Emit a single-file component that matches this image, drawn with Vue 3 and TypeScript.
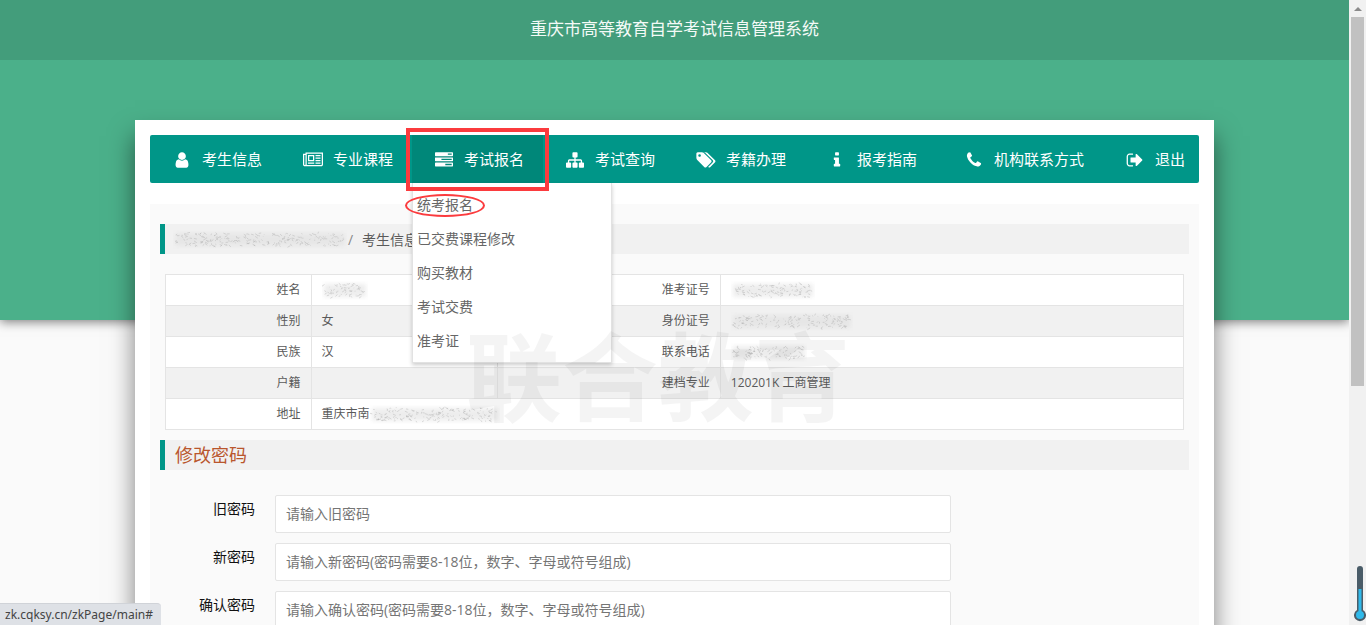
<script setup lang="ts">
interface NavItem {
  label: string
  box: string
  path: string
  active?: boolean
  spaced?: boolean
}

const bar = 'v256q0 26-19 45t-45 19h-1664q-26 0-45-19t-19-45v-256q0-26 19-45t45-19h1664q26 0 45 19t19 45z'

const navItems: NavItem[] = [
  {
    label: '考生信息',
    box: '0 0 1792 1792',
    path: 'M1536 1399q0 109-62.5 187t-150.5 78h-854q-88 0-150.5-78t-62.5-187q0-85 8.5-160.5t31.5-152 58.5-131 94-89 134.5-34.5q131 128 313 128t313-128q76 0 134.5 34.5t94 89 58.5 131 31.5 152 8.5 160.5zm-256-887q0 159-112.5 271.5t-271.5 112.5-271.5-112.5-112.5-271.5 112.5-271.5 271.5-112.5 271.5 112.5 112.5 271.5z',
  },
  {
    label: '专业课程',
    box: '0 0 2048 1792',
    path: 'M1024 512h-384v384h384v-384zm128 640v128h-640v-128h640zm0-768v640h-640v-640h640zm640 768v128h-512v-128h512zm0-256v128h-512v-128h512zm0-256v128h-512v-128h512zm0-256v128h-512v-128h512zm-1536 960v-960h-128v960q0 26 19 45t45 19 45-19 19-45zm1664 0v-1088h-1536v1088q0 33-11 64h1483q26 0 45-19t19-45zm128-1216v1216q0 80-56 136t-136 56h-1664q-80 0-136-56t-56-136v-1088h256v-128h1792z',
  },
  {
    label: '考试报名',
    box: '0 0 1792 1792',
    active: true,
    path: `M1024 1408h640v-128h-640v128zM640 896h1024v-128h-1024v128zM1280 384h384v-128h-384v128zM1792 1216${bar}M1792 704${bar}M1792 192${bar}`,
  },
  {
    label: '考试查询',
    box: '0 0 1792 1792',
    path: 'M1792 1248v320q0 40-28 68t-68 28h-320q-40 0-68-28t-28-68v-320q0-40 28-68t68-28h96v-192h-512v192h96q40 0 68 28t28 68v320q0 40-28 68t-68 28h-320q-40 0-68-28t-28-68v-320q0-40 28-68t68-28h96v-192h-512v192h96q40 0 68 28t28 68v320q0 40-28 68t-68 28h-320q-40 0-68-28t-28-68v-320q0-40 28-68t68-28h96v-192q0-52 38-90t90-38h512v-192h-96q-40 0-68-28t-28-68v-320q0-40 28-68t68-28h320q40 0 68 28t28 68v320q0 40-28 68t-68 28h-96v192h512q52 0 90 38t38 90v192h96q40 0 68 28t28 68z',
  },
  {
    label: '考籍办理',
    box: '128 0 1920 1792',
    path: 'M576 448q0-53-37.5-90.5t-90.5-37.5-90.5 37.5-37.5 90.5 37.5 90.5 90.5 37.5 90.5-37.5 37.5-90.5zm1067 576q0 53-37 90l-491 492q-39 37-91 37-53 0-90-37l-715-716q-38-37-64.5-101t-26.5-117v-416q0-52 38-90t90-38h416q53 0 117 26.5t102 64.5l715 714q37 39 37 91zm384 0q0 53-37 90l-491 492q-39 37-91 37-36 0-59-14t-53-45l470-470q37-37 37-90 0-52-37-91l-715-714q-38-38-102-64.5t-117-26.5h224q53 0 117 26.5t102 64.5l715 714q37 39 37 91z',
  },
  {
    label: '报考指南',
    box: '0 0 1792 1792',
    path: 'M1216 1344v128q0 26-19 45t-45 19h-512q-26 0-45-19t-19-45v-128q0-26 19-45t45-19h64v-384h-64q-26 0-45-19t-19-45v-128q0-26 19-45t45-19h384q26 0 45 19t19 45v576h64q26 0 45 19t19 45zm-128-1152v192q0 26-19 45t-45 19h-256q-26 0-45-19t-19-45v-192q0-26 19-45t45-19h256q26 0 45 19t19 45z',
  },
  {
    label: '机构联系方式',
    box: '0 0 1792 1792',
    spaced: true,
    path: 'M1600 1240q0 27-10 70.5t-21 68.5q-21 50-122 106-94 51-186 51-27 0-53-3.5t-57.5-12.5-47-14.5-55.5-20.5-49-18q-98-35-175-83-127-79-264-216t-216-264q-48-77-83-175-3-9-18-49t-20.5-55.5-14.5-47-12.5-57.5-3.5-53q0-92 51-186 56-101 106-122 25-11 68.5-21t70.5-10q14 0 21 3 18 6 53 76 11 19 30 54t35 63.5 31 53.5q3 4 17.5 25t21.5 35.5 7 28.5q0 20-28.5 50t-62 55-62 53-28.5 46q0 9 5 22.5t8.5 20.5 14 24 11.5 19q76 137 174 235t235 174q2 1 19 11.5t24 14 20.5 8.5 22.5 5q18 0 46-28.5t53-62 55-62 50-28.5q14 0 28.5 7t35.5 21.5 25 17.5q25 15 53.5 31t63.5 35 54 30q70 35 76 53 3 7 3 21z',
  },
  {
    label: '退出',
    box: '0 0 1792 1792',
    path: 'M704 1440q0 4 1 20t.5 26.5-3 23.5-10 19.5-20.5 6.5h-320q-119 0-203.5-84.5t-84.5-203.5v-704q0-119 84.5-203.5t203.5-84.5h320q13 0 22.5 9.5t9.5 22.5q0 4 1 20t.5 26.5-3 23.5-10 19.5-20.5 6.5h-320q-66 0-113 47t-47 113v704q0 66 47 113t113 47h312l11.5 1 11.5 3 8 5.5 7 9 2 13.5zm928-544q0 26-19 45l-544 544q-19 19-45 19t-45-19-19-45v-288h-448q-26 0-45-19t-19-45v-384q0-26 19-45t45-19h448v-288q0-26 19-45t45-19 45 19l544 544q19 19 19 45z',
  },
]

const menuItems = ['统考报名', '已交费课程修改', '购买教材', '考试交费', '准考证']

interface Cell {
  text?: string
  hidden?: number
}
interface Row {
  label: string
  value: Cell
  label2?: string
  value2?: Cell
}

const rows: Row[] = [
  { label: '姓名', value: { hidden: 46 }, label2: '准考证号', value2: { hidden: 84 } },
  { label: '性别', value: { text: '女' }, label2: '身份证号', value2: { hidden: 122 } },
  { label: '民族', value: { text: '汉' }, label2: '联系电话', value2: { hidden: 76 } },
  { label: '户籍', value: {}, label2: '建档专业', value2: { text: '120201K 工商管理' } },
  { label: '地址', value: { text: '重庆市南', hidden: 130 } },
]

const fields = [
  { id: 'old', label: '旧密码', hint: '请输入旧密码' },
  { id: 'new', label: '新密码', hint: '请输入新密码(密码需要8-18位，数字、字母或符号组成)' },
  { id: 'again', label: '确认密码', hint: '请输入确认密码(密码需要8-18位，数字、字母或符号组成)' },
]

// Short scattered strokes that stand in for masked personal data.
function scribble(width: number): string {
  let seed = width * 7919
  const next = () => {
    seed = (seed * 1103515245 + 12345) % 2147483648
    return seed / 2147483648
  }
  let d = ''
  for (let i = 0; i < width * 1.3; i++) {
    const x = 2 + next() * (width - 6)
    const y = 3 + next() * 13
    d += `M${x.toFixed(1)} ${y.toFixed(1)}l${(next() * 6 - 3).toFixed(1)} ${(next() * 4 - 2).toFixed(1)}`
  }
  return d
}
</script>

<template>
  <div class="window">
    <div class="page">
      <header class="top"><h1>重庆市高等教育自学考试信息管理系统</h1></header>
      <div class="band"></div>
      <main class="card">
        <nav class="nav">
          <div
            v-for="item in navItems"
            :key="item.label"
            class="nav-item"
            :class="{ active: item.active, spaced: item.spaced }"
          >
            <a href="#" class="nav-link">
              <svg class="icon" :viewBox="item.box" aria-hidden="true">
                <path :d="item.path" fill="currentColor" fill-rule="evenodd" />
              </svg>
              <span>{{ item.label }}</span>
            </a>
            <template v-if="item.active">
              <div class="menu">
                <a v-for="entry in menuItems" :key="entry" href="#">{{ entry }}</a>
              </div>
              <div class="frame"></div>
              <div class="ring"></div>
            </template>
          </div>
        </nav>

        <section class="content">
          <div class="bar crumb">
            <svg class="scribble" width="174" height="19" aria-hidden="true">
              <rect class="smear" x="2" y="3" width="170" height="13" />
              <path :d="scribble(174)" />
            </svg>
            <span class="slash">/</span>
            <span>考生信息</span>
          </div>

          <table class="info">
            <colgroup>
              <col class="c1" />
              <col class="c2" />
              <col class="c3" />
              <col />
            </colgroup>
            <tbody>
              <tr v-for="row in rows" :key="row.label">
                <th scope="row">{{ row.label }}</th>
                <td :colspan="row.label2 ? 1 : 3">
                  <div class="cell">
                    <span v-if="row.value.text">{{ row.value.text }}</span>
                    <svg v-if="row.value.hidden" class="scribble" :width="row.value.hidden" height="19" aria-hidden="true">
                      <rect class="smear" x="2" y="3" :width="row.value.hidden - 4" height="13" />
                      <path :d="scribble(row.value.hidden)" />
                    </svg>
                  </div>
                </td>
                <template v-if="row.label2 && row.value2">
                  <th scope="row">{{ row.label2 }}</th>
                  <td>
                    <div class="cell">
                      <span v-if="row.value2.text">{{ row.value2.text }}</span>
                      <svg v-if="row.value2.hidden" class="scribble" :width="row.value2.hidden" height="19" aria-hidden="true">
                        <rect class="smear" x="2" y="3" :width="row.value2.hidden - 4" height="13" />
                        <path :d="scribble(row.value2.hidden)" />
                      </svg>
                    </div>
                  </td>
                </template>
              </tr>
            </tbody>
          </table>

          <h2 class="bar heading">修改密码</h2>

          <form class="form">
            <div v-for="f in fields" :key="f.id" class="field">
              <label :for="f.id">{{ f.label }}</label>
              <input :id="f.id" type="password" :placeholder="f.hint" />
            </div>
          </form>
        </section>
      </main>
      <div class="watermark">联合教育</div>
      <div class="status">zk.cqksy.cn/zkPage/main#</div>
    </div>

    <div class="scroll">
      <svg class="arrow" viewBox="0 0 17 17" aria-hidden="true"><path d="M5 11l4-4 4 4z" fill="#8a8a8a" /></svg>
      <div class="thumb"></div>
      <svg class="thermo" viewBox="0 0 12 58" aria-hidden="true">
        <path d="M3 4a3 3 0 0 1 6 0v41a6 6 0 1 1-6 0z" fill="#4a5c68" />
        <circle cx="6" cy="50" r="4" fill="#2fb9ea" />
        <path d="M6 24v24" stroke="#2fb9ea" stroke-width="3" />
      </svg>
    </div>
  </div>
</template>

<style>
body {
  margin: 0;
  background: #fafafa;
}
</style>

<style scoped>
* {
  box-sizing: border-box;
}
.window {
  display: grid;
  grid-template-columns: minmax(0, 1fr) 17px;
  height: 100vh;
  overflow: hidden;
  position: relative;
  font-family: "Open Sans", "Noto Sans CJK SC", sans-serif;
  font-size: 14px;
  color: #5a5a5a;
}
.page {
  position: relative;
  overflow: hidden;
  background: #fafafa;
}
.top {
  position: relative;
  z-index: 1;
  height: 60px;
  background: #439d7b;
  text-align: center;
}
h1 {
  margin: 0;
  font-size: 17px;
  font-weight: 400;
  line-height: 58px;
  color: #f4faf7;
}
.band {
  position: absolute;
  top: 0;
  left: 0;
  right: 0;
  height: 320px;
  background: #4bb08a;
  box-shadow: 0 2px 10px rgba(0, 0, 0, 0.5);
}
.card {
  position: relative;
  width: 80%;
  margin: 60px auto 0;
  padding: 15px;
  background: #fff;
  box-shadow: 0 16px 24px rgba(0, 0, 0, 0.5);
}
.nav {
  display: flex;
  height: 48px;
  background: #009688;
  border-radius: 2px;
}
.nav-item {
  position: relative;
}
.nav-item.spaced {
  margin-left: 6px;
}
.nav-item.active {
  background: #008779;
}
.nav-link {
  display: flex;
  align-items: center;
  gap: 10px;
  height: 48px;
  padding: 0 19px 2px 22px;
  font-size: 15px;
  white-space: nowrap;
  color: #fff;
  text-decoration: none;
}
.nav-item:last-child .nav-link {
  padding-right: 14px;
}
.icon {
  width: 20px;
  height: 18px;
  margin-top: 4px;
}
.menu {
  position: absolute;
  z-index: 2;
  top: 48px;
  left: 0;
  width: 200px;
  padding: 5px 0 4px;
  background: #fff;
  border: 1px solid #e2e2e2;
  border-top: 0;
  box-shadow: 0 2px 4px rgba(0, 0, 0, 0.2);
}
.menu a {
  display: block;
  padding: 0 4px;
  line-height: 34px;
  color: #666;
  text-decoration: none;
}
.frame {
  position: absolute;
  z-index: 3;
  top: -7px;
  right: -6px;
  bottom: -8px;
  left: -6px;
  border: 4px solid #fb3b3e;
}
.ring {
  position: absolute;
  z-index: 3;
  top: 59px;
  left: -7px;
  width: 80px;
  height: 23px;
  border: 2px solid #fb3b3e;
  border-radius: 50%;
}
.content {
  margin-top: 21px;
  padding: 20px 10px;
  background: #fafafa;
}
.bar {
  display: flex;
  align-items: center;
  height: 30px;
  margin: 0;
  padding: 0 10px;
  background: #f1f1f1;
  border-left: 5px solid #009688;
}
.crumb {
  padding-left: 8px;
}
.slash {
  margin: 0 9px 0 1px;
  color: #888;
}
.heading {
  padding-bottom: 2px;
  font-size: 18px;
  font-weight: 400;
  color: #b9562d;
}
.info {
  width: calc(100% - 10px);
  margin: 20px 5px 10px;
  table-layout: fixed;
  border-collapse: collapse;
  background: #fff;
  font-size: 12px;
}
.c1 {
  width: 14.3%;
}
.c2 {
  width: 18.3%;
}
.c3 {
  width: 21.9%;
}
.info tr:nth-child(even) {
  background: #f1f1f1;
}
.info th,
.info td {
  height: 31px;
  padding: 0 10px;
  border: 1px solid #e4e4e4;
  font-weight: 400;
  line-height: 20px;
}
.info th {
  text-align: right;
}
.cell {
  display: flex;
  align-items: center;
}
.scribble {
  flex: none;
}
.scribble path {
  fill: none;
  stroke: #aaa;
  stroke-opacity: 0.4;
  stroke-width: 1;
}
.smear {
  fill: #ddd;
  opacity: 0.5;
  filter: blur(2px);
}
.form {
  padding: 25px 238px 0 0;
}
.field {
  display: grid;
  grid-template-columns: 95px minmax(0, 1fr);
  gap: 20px;
  margin-bottom: 10px;
}
.field label {
  padding-top: 4px;
  line-height: 20px;
  text-align: right;
  color: #111;
}
.field input {
  width: 100%;
  height: 38px;
  padding: 0 10px 2px;
  background: #fff;
  border: 1px solid #e4e4e4;
  border-radius: 2px;
  font: inherit;
}
.field input::placeholder {
  color: #757575;
}
.watermark {
  position: absolute;
  z-index: 4;
  top: 314px;
  left: 466px;
  font-family: "Noto Sans CJK SC", sans-serif;
  font-size: 96px;
  font-weight: 700;
  line-height: 116px;
  white-space: nowrap;
  color: rgba(0, 0, 0, 0.045);
  pointer-events: none;
}
.status {
  position: absolute;
  z-index: 5;
  bottom: 0;
  left: 0;
  height: 22px;
  padding: 0 8px 0 5px;
  background: #dee1e6;
  border-top: 1px solid #d0d3d8;
  border-radius: 0 4px 0 0;
  font-family: "Noto Sans", sans-serif;
  font-size: 12px;
  line-height: 21px;
  color: #444;
}
.scroll {
  background: #f1f1f1;
}
.arrow {
  display: block;
  width: 17px;
  height: 17px;
}
.thumb {
  height: 59%;
  margin: 0 2px;
  background: #c1c1c1;
}
.thermo {
  position: absolute;
  right: 0;
  bottom: 2px;
  width: 12px;
  height: 58px;
}
</style>
